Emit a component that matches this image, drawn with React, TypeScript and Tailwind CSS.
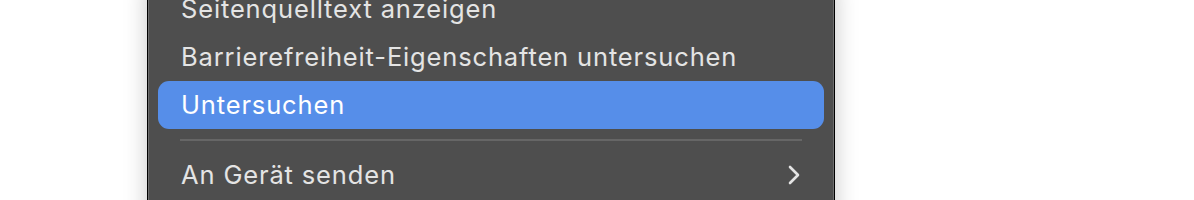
import React from "react";

const font = { fontFamily: "Inter, 'Noto Sans', sans-serif" };

function Row({ label, active, sub }: { label: string; active?: boolean; sub?: boolean }) {
  return (
    <div
      className={`h-[48px] flex items-center justify-between pl-[23px] pr-[23px] rounded-[11px] text-[25.5px] tracking-[0.85px] leading-none ${
        active ? "bg-[#568ee9] text-white" : "text-[#e4e4e4]"
      }`}
    >
      <span>{label}</span>
      {sub && (
        <svg width="14" height="22" viewBox="0 0 14 22" fill="none">
          <path d="M3 3 L11 11 L3 19" stroke="#e4e4e4" strokeWidth="2.6" strokeLinecap="round" strokeLinejoin="round" />
        </svg>
      )}
    </div>
  );
}

export default function App() {
  return (
    <div className="w-[1194px] h-[200px] bg-white overflow-hidden" style={font}>
      <div className="ml-[147px] w-[688px] mt-[-16px] h-[260px] bg-[#4e4e4e] border border-black shadow-[inset_0_0_0_1px_#6e6e6e,0_0_22px_rgba(0,0,0,0.22)] px-[10px]">
        <Row label="Seitenquelltext anzeigen" />
        <Row label="Barrierefreiheit-Eigenschaften untersuchen" />
        <Row label="Untersuchen" active />
        <div className="h-[22px] flex items-center px-[22px]">
          <div className="h-[2px] w-full bg-[#666666]" />
        </div>
        <Row label="An Gerät senden" sub />
      </div>
    </div>
  );
}
